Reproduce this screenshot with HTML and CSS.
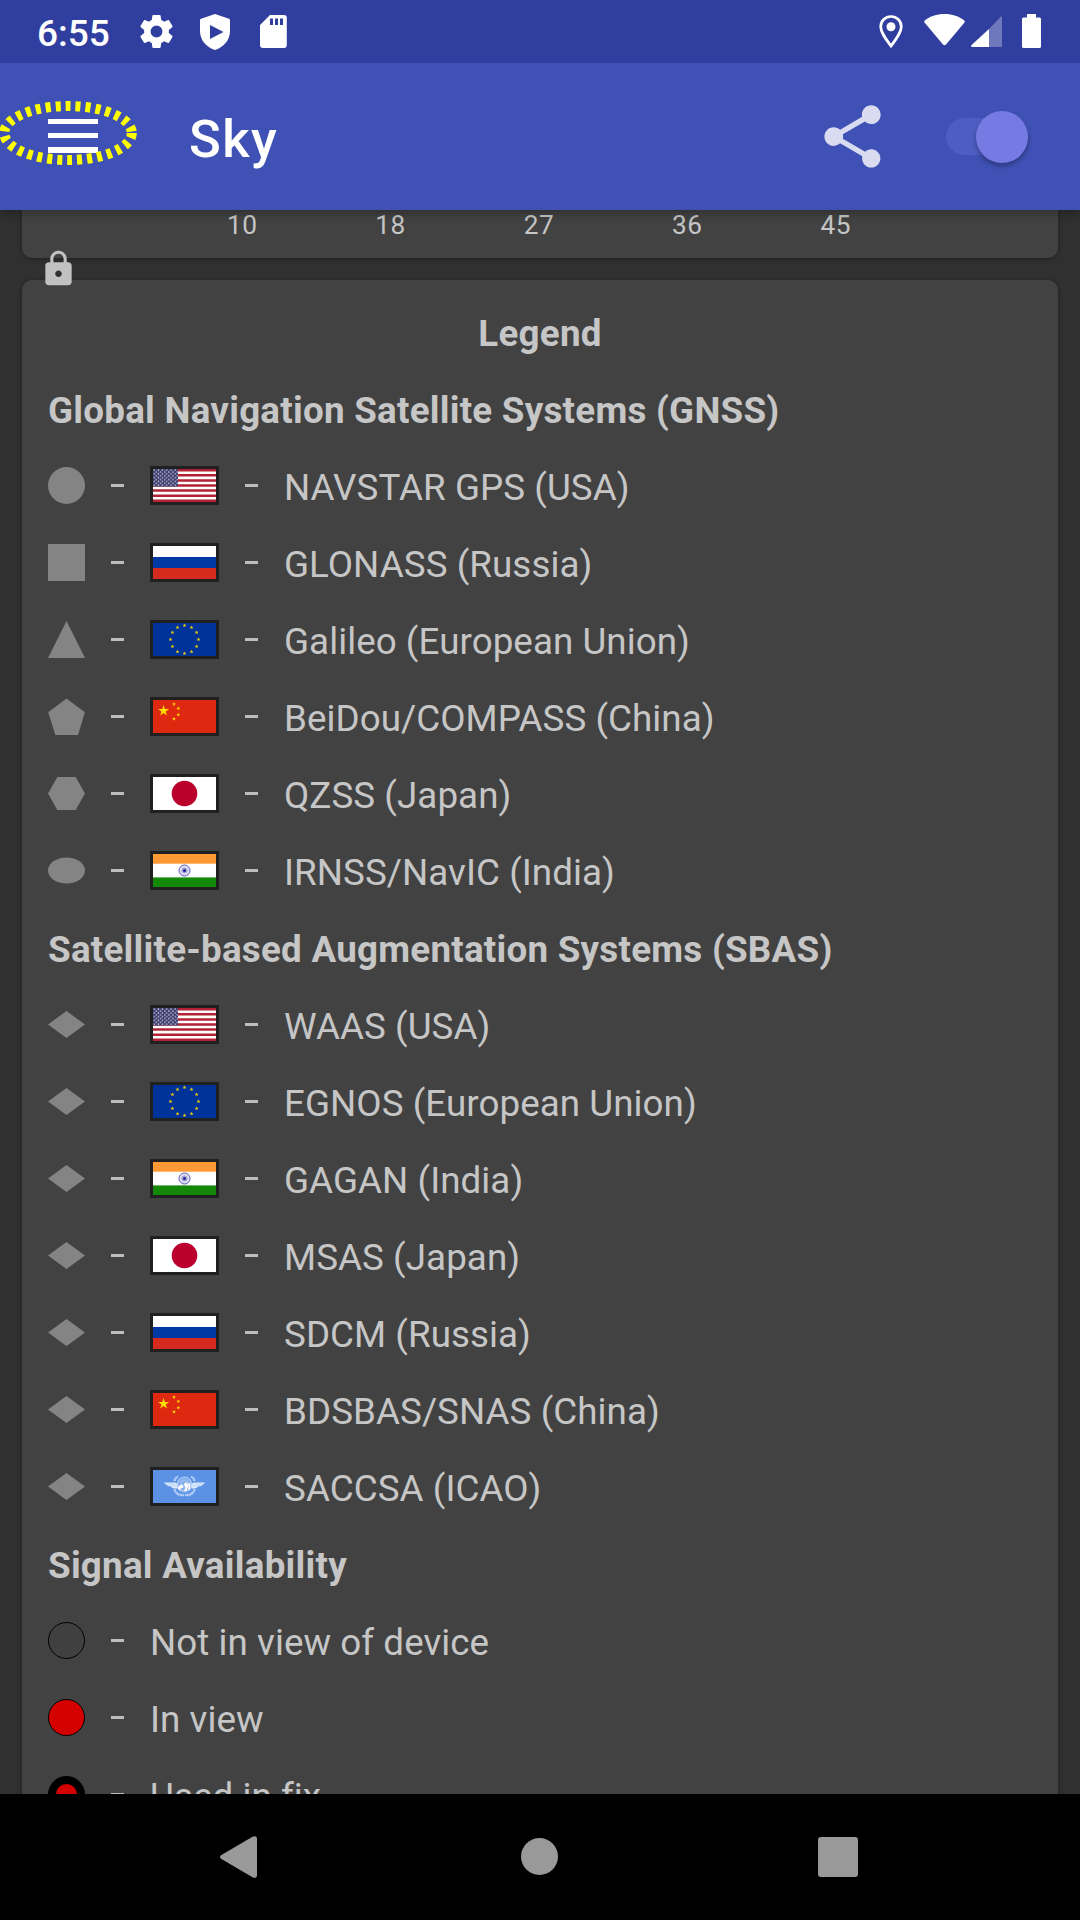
FILE: index.html
```html
<!DOCTYPE html>
<html lang="en">
<head>
<meta charset="utf-8">
<title>Sky</title>
<link rel="stylesheet" href="styles.css">
</head>
<body>
<svg class="defs" aria-hidden="true">
  <defs>
    <pattern id="stars" width="4.2" height="3.8" patternUnits="userSpaceOnUse">
      <circle cx="1.2" cy="1.1" r=".75" fill="#d5d4e4"/>
      <circle cx="3.3" cy="3" r=".75" fill="#d5d4e4"/>
    </pattern>
    <symbol id="flag-us" viewBox="0 0 63 33">
      <rect width="63" height="33" fill="#fff"/>
      <path d="M0 1.27h63M0 6.35h63M0 11.42h63M0 16.5h63M0 21.58h63M0 26.65h63M0 31.73h63" stroke="#b22234" stroke-width="2.54"/>
      <rect width="25" height="17.5" fill="#3c3b6e"/>
      <rect width="25" height="17.5" fill="url(#stars)"/>
    </symbol>
    <symbol id="flag-ru" viewBox="0 0 63 33">
      <rect width="63" height="33" fill="#fff"/>
      <rect y="11" width="63" height="11" fill="#0039a6"/>
      <rect y="22" width="63" height="11" fill="#d52b1e"/>
    </symbol>
    <symbol id="star" viewBox="-10 -10 20 20">
      <path d="M0-10 2.25-3.1H9.5L3.63 1.18 5.88 8.1 0 3.8-5.88 8.1-3.63 1.18-9.5-3.1h7.25z"/>
    </symbol>
    <symbol id="flag-eu" viewBox="0 0 63 33">
      <rect width="63" height="33" fill="#039"/>
      <g fill="#f0cc08">
        <use href="#star" x="29.3" y=".3" width="4.4" height="4.4"/>
        <use href="#star" x="36.3" y="2.2" width="4.4" height="4.4"/>
        <use href="#star" x="41.4" y="7.3" width="4.4" height="4.4"/>
        <use href="#star" x="43.3" y="14.3" width="4.4" height="4.4"/>
        <use href="#star" x="41.4" y="21.3" width="4.4" height="4.4"/>
        <use href="#star" x="36.3" y="26.4" width="4.4" height="4.4"/>
        <use href="#star" x="29.3" y="28.3" width="4.4" height="4.4"/>
        <use href="#star" x="22.3" y="26.4" width="4.4" height="4.4"/>
        <use href="#star" x="17.2" y="21.3" width="4.4" height="4.4"/>
        <use href="#star" x="15.3" y="14.3" width="4.4" height="4.4"/>
        <use href="#star" x="17.2" y="7.3" width="4.4" height="4.4"/>
        <use href="#star" x="22.3" y="2.2" width="4.4" height="4.4"/>
      </g>
    </symbol>
    <symbol id="flag-cn" viewBox="0 0 63 33">
      <rect width="63" height="33" fill="#de2910"/>
      <g fill="#ffde00">
        <use href="#star" x="4.8" y="5" width="11.6" height="11.6"/>
        <use href="#star" x="18.9" y="2" width="4.2" height="4.2"/>
        <use href="#star" x="23.2" y="6.3" width="4.2" height="4.2"/>
        <use href="#star" x="23.2" y="12.5" width="4.2" height="4.2"/>
        <use href="#star" x="18.9" y="16.8" width="4.2" height="4.2"/>
      </g>
    </symbol>
    <symbol id="flag-jp" viewBox="0 0 63 33">
      <rect width="63" height="33" fill="#fff"/>
      <circle cx="31.5" cy="16.5" r="12.8" fill="#bc002d"/>
    </symbol>
    <symbol id="flag-in" viewBox="0 0 63 33">
      <rect width="63" height="33" fill="#fff"/>
      <rect width="63" height="9.7" fill="#f93"/>
      <rect y="23.4" width="63" height="9.6" fill="#138808"/>
      <circle cx="31.5" cy="16.5" r="5.5" fill="#e0e0f3" stroke="#5a5ab8"/>
      <circle cx="31.5" cy="16.5" r="3" fill="#a5a5da"/>
      <circle cx="31.5" cy="16.5" r="1.5" fill="#22229a"/>
    </symbol>
    <symbol id="flag-icao" viewBox="0 0 63 33">
      <rect width="63" height="33" fill="#5b92e5"/>
      <circle cx="31.5" cy="15" r="8" fill="#85aeed"/>
      <path d="M10.8 12.4h11c1.2 0 1.8 1 3.3 2l-.8 4.2c-3 0-5.400-.6-6.400-2.200-3.500-.3-4.200-1.300-7.100-4zM52.200 12.400h-11c-1.200 0-1.800 1-3.300 2l.8 4.200c3 0 5.400-.6 6.400-2.200 3.500-.3 4.200-1.300 7.100-4z" fill="#deebfa"/>
      <path d="M13 14h9M16 15.800h8M50 14h-9M47 15.800h-8" stroke="#a9c7f2" stroke-width=".6"/>
      <circle cx="31.500" cy="14" r="7" fill="none" stroke="#bcd3f6" stroke-width=".9"/>
      <circle cx="31.500" cy="14" r="4" fill="none" stroke="#a9c6f3" stroke-width=".8"/>
      <path d="M21.500 19c.6 4 4 6.600 9.500 6M41.500 19c-.6 4-4 6.600-9.500 6M21.500 11c.4-2.200 1.500-3.600 3.500-4.200M41.500 11c-.4-2.200-1.500-3.600-3.500-4.200" fill="none" stroke="#bdd5f6" stroke-width="2.200" stroke-dasharray="1.800 .4"/>
      <path d="m25.500 16.500 3-2 2 1-.8 2.200-2 .8-1 2-1.800-2zM30.800 14.500l1.500-2 2 .3.800 3.500-1.500 4.500-2.700.4 1.600-3.500zM35.500 12.500l2 1.500-.5 5.500-1.700 1z" fill="#fff"/>
    </symbol>
    <symbol id="shape-circle" viewBox="0 0 37 37"><circle cx="18.500" cy="18.500" r="18.500"/></symbol>
    <symbol id="shape-square" viewBox="0 0 37 37"><rect width="37" height="37"/></symbol>
    <symbol id="shape-triangle" viewBox="0 0 37 37"><path d="M18.500 0 37 37H0z"/></symbol>
    <symbol id="shape-pentagon" viewBox="0 0 37 37"><path d="M18.500.4 36.900 14.200 30 37H7.300L.2 14.200z"/></symbol>
    <symbol id="shape-hexagon" viewBox="0 0 37 37"><path d="M9.300 2h18.400L37 18.500 27.700 35H9.300L0 18.500z"/></symbol>
    <symbol id="shape-ellipse" viewBox="0 0 37 37"><ellipse cx="18.500" cy="18.500" rx="18.500" ry="13"/></symbol>
    <symbol id="shape-diamond" viewBox="0 0 37 37"><path d="M18.500 5 37 18.500 18.500 32 0 18.500z"/></symbol>
  </defs>
</svg>

<div class="screen">
  <header class="top">
    <div class="status">
      <span class="clock">6:55</span>
      <svg class="gear" viewBox="2 2 20 20"><path d="M19.430 12.980c.04-.32.070-.64.070-.98s-.03-.66-.07-.98l2.110-1.650c.19-.15.240-.42.120-.64l-2-3.460c-.12-.22-.39-.3-.61-.22l-2.490 1c-.52-.4-1.080-.73-1.690-.98l-.38-2.650C14.460 2.180 14.250 2 14 2h-4c-.25 0-.46.180-.49.420l-.38 2.650c-.61.250-1.170.590-1.690.980l-2.490-1c-.23-.09-.49 0-.61.220l-2 3.460c-.13.220-.07.490.120.640l2.110 1.650c-.04.320-.07.650-.07.980s.03.660.070.980l-2.110 1.650c-.19.150-.24.420-.12.640l2 3.460c.12.220.390.300.610.220l2.490-1c.52.400 1.080.730 1.690.980l.38 2.650c.03.240.240.420.490.420h4c.25 0 .46-.18.490-.42l.38-2.650c.61-.25 1.170-.59 1.690-.98l2.490 1c.23.090.490 0 .61-.22l2-3.460c.12-.22.070-.49-.12-.64zM12 15.600a3.600 3.600 0 1 1 0-7.200 3.600 3.600 0 0 1 0 7.200z"/></svg>
      <svg class="shield" viewBox="0 0 30 36"><path fill-rule="evenodd" d="M15 0 29 4.700q1 .4 1 1.500V17C30 26 24 33 15 36 6 33 0 26 0 17V6.200q0-1.100 1-1.500zM10 11v14l13.500-7z"/></svg>
      <svg class="sdcard" viewBox="0 0 27 33"><path fill-rule="evenodd" d="M10 0h14q2.800 0 2.800 2.800V30q0 3-2.800 3H3q-3 0-3-3V10zM10 3.500v6.500h3V3.500zm5 0v6.500h3V3.500zm5 0v6.500h3V3.500z"/></svg>
      <span class="spacer"></span>
      <svg class="pin" viewBox="0 0 24 33"><path d="M12 1.500c-6 0-10.300 4.500-10.300 10.200 0 5.500 4.800 11.800 10.300 19.300 5.500-7.500 10.300-13.800 10.300-19.300C22.300 6 18 1.500 12 1.500z" fill="none" stroke="#fff" stroke-width="2.700"/><circle cx="12" cy="11.700" r="4.500"/></svg>
      <svg class="wifi" viewBox="0 0 41 32"><path d="M.7 6.500C6 2.300 12.500 0 20.500 0S35 2.300 40.300 6.500q.9.900.2 1.900L22 30.600q-1.500 1.500-3 0L.5 8.400q-.7-1 .2-1.900z"/></svg>
      <svg class="signal" viewBox="0 0 31 31"><path d="M18 13 30 .5q1-.8 1 .8V30q0 1-1 1H18z" opacity=".3"/><path d="M18 13v18H1q-1.700-.5-.7-1.800z"/></svg>
      <svg class="battery" viewBox="0 0 19 34"><path d="M5 0h9v3.500h3.500q1.500 0 1.500 1.500v27.500q0 1.500-1.500 1.500h-16Q0 34 0 32.500V5q0-1.500 1.500-1.500H5z"/></svg>
    </div>
    <div class="appbar">
      <div class="menu">
        <i></i><i></i><i></i>
        <svg class="highlight" viewBox="0 0 142 68"><ellipse cx="70" cy="34" rx="63.800" ry="27"/></svg>
      </div>
      <h1>Sky</h1>
      <svg class="share" viewBox="0 0 24 24"><path d="M18 16.080c-.76 0-1.440.300-1.960.770L8.910 12.700c.05-.23.090-.46.090-.7s-.04-.47-.09-.7l7.050-4.110c.54.500 1.250.810 2.040.810 1.660 0 3-1.340 3-3s-1.340-3-3-3-3 1.340-3 3c0 .24.040.470.090.700L8.040 9.810C7.500 9.310 6.790 9 6 9c-1.660 0-3 1.340-3 3s1.340 3 3 3c.79 0 1.500-.31 2.040-.81l7.120 4.160c-.05.210-.08.430-.08.650 0 1.610 1.310 2.920 2.920 2.920s2.920-1.310 2.920-2.920-1.310-2.920-2.920-2.920z"/></svg>
      <div class="switch"><b></b></div>
    </div>
  </header>

  <main class="content">
    <section class="card chart">
      <span>10</span><span>18</span><span>27</span><span>36</span><span>45</span>
    </section>
    <svg class="lock" viewBox="0 0 24 24"><path d="M18 8h-1V6c0-2.760-2.240-5-5-5S7 3.240 7 6v2H6c-1.100 0-2 .9-2 2v10c0 1.100.900 2 2 2h12c1.100 0 2-.9 2-2V10c0-1.100-.9-2-2-2zm-6 9c-1.100 0-2-.9-2-2s.9-2 2-2 2 .9 2 2-.9 2-2 2zm3.100-9H8.900V6c0-1.710 1.390-3.100 3.100-3.100s3.100 1.390 3.100 3.100z"/></svg>
    <section class="card legend">
      <h2 class="title">Legend</h2>
      <h2>Global Navigation Satellite Systems (GNSS)</h2>
      <div class="row"><svg class="shape"><use href="#shape-circle"/></svg><i class="dash"></i><svg class="flag"><use href="#flag-us"/></svg><i class="dash"></i><span>NAVSTAR GPS (USA)</span></div>
      <div class="row"><svg class="shape"><use href="#shape-square"/></svg><i class="dash"></i><svg class="flag"><use href="#flag-ru"/></svg><i class="dash"></i><span>GLONASS (Russia)</span></div>
      <div class="row"><svg class="shape"><use href="#shape-triangle"/></svg><i class="dash"></i><svg class="flag"><use href="#flag-eu"/></svg><i class="dash"></i><span>Galileo (European Union)</span></div>
      <div class="row"><svg class="shape"><use href="#shape-pentagon"/></svg><i class="dash"></i><svg class="flag"><use href="#flag-cn"/></svg><i class="dash"></i><span>BeiDou/COMPASS (China)</span></div>
      <div class="row"><svg class="shape"><use href="#shape-hexagon"/></svg><i class="dash"></i><svg class="flag"><use href="#flag-jp"/></svg><i class="dash"></i><span>QZSS (Japan)</span></div>
      <div class="row"><svg class="shape"><use href="#shape-ellipse"/></svg><i class="dash"></i><svg class="flag"><use href="#flag-in"/></svg><i class="dash"></i><span>IRNSS/NavIC (India)</span></div>
      <h2>Satellite-based Augmentation Systems (SBAS)</h2>
      <div class="row"><svg class="shape"><use href="#shape-diamond"/></svg><i class="dash"></i><svg class="flag"><use href="#flag-us"/></svg><i class="dash"></i><span>WAAS (USA)</span></div>
      <div class="row"><svg class="shape"><use href="#shape-diamond"/></svg><i class="dash"></i><svg class="flag"><use href="#flag-eu"/></svg><i class="dash"></i><span>EGNOS (European Union)</span></div>
      <div class="row"><svg class="shape"><use href="#shape-diamond"/></svg><i class="dash"></i><svg class="flag"><use href="#flag-in"/></svg><i class="dash"></i><span>GAGAN (India)</span></div>
      <div class="row"><svg class="shape"><use href="#shape-diamond"/></svg><i class="dash"></i><svg class="flag"><use href="#flag-jp"/></svg><i class="dash"></i><span>MSAS (Japan)</span></div>
      <div class="row"><svg class="shape"><use href="#shape-diamond"/></svg><i class="dash"></i><svg class="flag"><use href="#flag-ru"/></svg><i class="dash"></i><span>SDCM (Russia)</span></div>
      <div class="row"><svg class="shape"><use href="#shape-diamond"/></svg><i class="dash"></i><svg class="flag"><use href="#flag-cn"/></svg><i class="dash"></i><span>BDSBAS/SNAS (China)</span></div>
      <div class="row"><svg class="shape"><use href="#shape-diamond"/></svg><i class="dash"></i><svg class="flag"><use href="#flag-icao"/></svg><i class="dash"></i><span>SACCSA (ICAO)</span></div>
      <h2>Signal Availability</h2>
      <div class="row"><i class="dot hidden-sat"></i><i class="dash"></i><span>Not in view of device</span></div>
      <div class="row"><i class="dot in-view"></i><i class="dash"></i><span>In view</span></div>
      <div class="row"><i class="dot in-fix"></i><i class="dash"></i><span>Used in fix</span></div>
    </section>
  </main>

  <nav class="navbar">
    <svg class="back" viewBox="0 0 37 42"><path d="M1 19.300 32.500.7Q37-1 37 3v36q0 4-4.500 2.300L1 22.700q-2-1.700 0-3.400z"/></svg>
    <i class="home"></i>
    <i class="recent"></i>
  </nav>
</div>
</body>
</html>
```
FILE: styles.css
```css
* { box-sizing: border-box; }

body {
  margin: 0;
  background: #303030;
  color: #c6c6c6;
  font-family: Roboto, "Noto Sans", sans-serif;
  font-size: 36.75px;
}

.defs { position: absolute; width: 0; height: 0; }

svg { display: block; flex: none; }

.screen {
  display: flex;
  flex-direction: column;
  width: 1080px;
  height: 1920px;
  overflow: hidden;
}

.top {
  flex: none;
  z-index: 1;
  box-shadow: 0 3px 10px rgba(0, 0, 0, .3);
}

.status {
  display: flex;
  align-items: flex-start;
  height: 63px;
  padding: 14px 39px 0 37px;
  background: #303f9f;
  color: #fff;
  fill: #fff;
}

.clock {
  width: 103px;
  margin-top: -2px;
  font-size: 37px;
  font-weight: 500;
  line-height: 43px;
}

.gear { width: 33px; height: 33px; margin: 1px 27px 0 0; }
.shield { width: 30px; height: 36px; margin-right: 30px; }
.sdcard { width: 27px; height: 33px; margin-top: 1px; }
.spacer { flex: 1; }
.pin { width: 24px; height: 33px; margin: 1px 21px 0 0; }
.wifi { width: 41px; height: 32px; margin-right: 6px; }
.signal { width: 31px; height: 31px; margin: 2px 20px 0 0; }
.battery { width: 19px; height: 34px; }

.appbar {
  display: flex;
  align-items: center;
  height: 147px;
  padding: 0 51px 0 48px;
  background: #3f51b5;
}

.menu {
  position: relative;
  display: grid;
  gap: 9px;
  width: 50px;
  margin-top: -1px;
}

.menu i { height: 5px; background: #fff; }
.menu i:nth-child(3) { height: 6px; }

.highlight {
  position: absolute;
  left: -50px;
  top: -20px;
  width: 142px;
  height: 68px;
}

.highlight ellipse {
  fill: none;
  stroke: #ff0;
  stroke-width: 10;
  stroke-dasharray: 5 5;
}

h1 {
  flex: 1;
  margin: 5px 0 0 91px;
  color: #fff;
  font-size: 52.5px;
  font-weight: 500;
  letter-spacing: 1.4px;
  line-height: 62px;
}

.share { width: 75px; height: 75px; margin-right: 56px; fill: #d9dcf0; }

.switch {
  display: flex;
  align-items: center;
  justify-content: flex-end;
  width: 76px;
  height: 37px;
  margin-right: 7px;
  border-radius: 19px;
  background: #4e5dc2;
}

.switch b {
  flex: none;
  width: 52px;
  height: 52px;
  margin-right: -6px;
  border-radius: 50%;
  background: #757be3;
  box-shadow: 0 3px 5px rgba(0, 0, 0, .3);
}

.content {
  position: relative;
  flex: 1;
  min-height: 0;
  overflow: hidden;
  padding: 0 22px;
}

.card {
  border-radius: 10px;
  background: #424242;
  box-shadow: 0 1px 4px rgba(0, 0, 0, .35);
}

.chart {
  display: grid;
  grid-template-columns: repeat(5, 148.4px);
  height: 48px;
  margin-bottom: 22px;
  padding-left: 146px;
  border-radius: 0 0 10px 10px;
  font-size: 26.25px;
  letter-spacing: .5px;
  line-height: 30px;
  text-align: center;
}

.lock {
  position: absolute;
  left: 38px;
  top: 39px;
  width: 41px;
  height: 39.5px;
  fill: #c1c1c1;
}

.legend {
  display: flex;
  flex-direction: column;
  gap: 34px;
  padding: 32px 26px;
}

h2 {
  margin: 0;
  font-size: inherit;
  font-weight: 700;
  letter-spacing: .25px;
  line-height: 43px;
}

.title { text-align: center; }

.row {
  display: flex;
  align-items: flex-start;
  gap: 26px;
  height: 43px;
  letter-spacing: .06px;
  line-height: 43px;
  white-space: nowrap;
}

.shape { width: 37px; height: 37px; margin-top: 1px; fill: #848484; }

.dash { width: 13px; height: 3px; margin-top: 18px; background: #bdbdbd; }

.flag { width: 69px; height: 39px; border: 3px solid #202020; }

.dot {
  width: 37px;
  height: 37px;
  margin-top: 1px;
  border: 1px solid #000;
  border-radius: 50%;
  background: #d50000;
}

.hidden-sat { background: #404040; }
.in-fix { border-width: 8px; }

.navbar {
  display: flex;
  flex: none;
  align-items: center;
  height: 126px;
  padding: 0 222px 0 220px;
  justify-content: space-between;
  background: #000;
}

.back { width: 37px; height: 42px; fill: #999; }
.home { width: 37px; height: 37px; margin: 0 0 1px 3px; border-radius: 50%; background: #999; }
.recent { width: 40px; height: 40px; border-radius: 3px; background: #999; }
```
